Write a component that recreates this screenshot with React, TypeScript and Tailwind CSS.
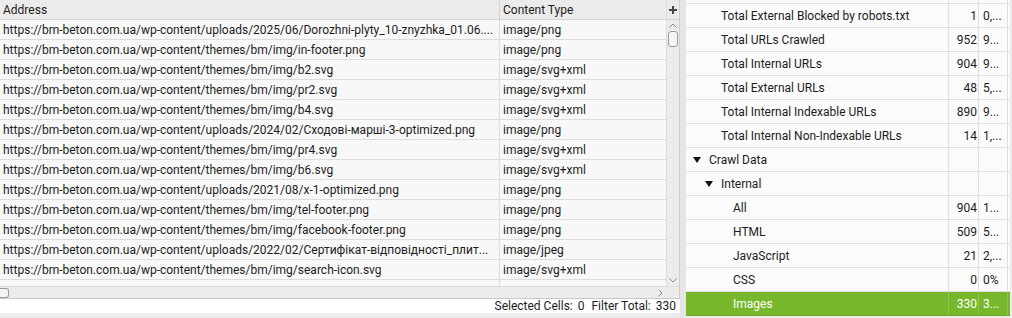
import React from "react";

const rows = [
  ["https://bm-beton.com.ua/wp-content/uploads/2025/06/Dorozhni-plyty_10-znyzhka_01.06....", "image/png"],
  ["https://bm-beton.com.ua/wp-content/themes/bm/img/in-footer.png", "image/png"],
  ["https://bm-beton.com.ua/wp-content/themes/bm/img/b2.svg", "image/svg+xml"],
  ["https://bm-beton.com.ua/wp-content/themes/bm/img/pr2.svg", "image/svg+xml"],
  ["https://bm-beton.com.ua/wp-content/themes/bm/img/b4.svg", "image/svg+xml"],
  ["https://bm-beton.com.ua/wp-content/uploads/2024/02/Сходові-марші-3-optimized.png", "image/png"],
  ["https://bm-beton.com.ua/wp-content/themes/bm/img/pr4.svg", "image/svg+xml"],
  ["https://bm-beton.com.ua/wp-content/themes/bm/img/b6.svg", "image/svg+xml"],
  ["https://bm-beton.com.ua/wp-content/uploads/2021/08/x-1-optimized.png", "image/png"],
  ["https://bm-beton.com.ua/wp-content/themes/bm/img/tel-footer.png", "image/png"],
  ["https://bm-beton.com.ua/wp-content/themes/bm/img/facebook-footer.png", "image/png"],
  ["https://bm-beton.com.ua/wp-content/uploads/2022/02/Сертифікат-відповідності_плит...", "image/jpeg"],
  ["https://bm-beton.com.ua/wp-content/themes/bm/img/search-icon.svg", "image/svg+xml"],
];

type Stat = { label: string; level: number; toggle?: boolean; n?: string; p?: string; active?: boolean };

const stats: Stat[] = [
  { label: "", level: 1 },
  { label: "Total External Blocked by robots.txt", level: 1, n: "1", p: "0,..." },
  { label: "Total URLs Crawled", level: 1, n: "952", p: "9..." },
  { label: "Total Internal URLs", level: 1, n: "904", p: "9..." },
  { label: "Total External URLs", level: 1, n: "48", p: "5,..." },
  { label: "Total Internal Indexable URLs", level: 1, n: "890", p: "9..." },
  { label: "Total Internal Non-Indexable URLs", level: 1, n: "14", p: "1,..." },
  { label: "Crawl Data", level: 0, toggle: true },
  { label: "Internal", level: 1, toggle: true },
  { label: "All", level: 2, n: "904", p: "1..." },
  { label: "HTML", level: 2, n: "509", p: "5..." },
  { label: "JavaScript", level: 2, n: "21", p: "2,..." },
  { label: "CSS", level: 2, n: "0", p: "0%" },
  { label: "Images", level: 2, n: "330", p: "3...", active: true },
];

const indent = ["pl-[23px]", "pl-[35px]", "pl-[47px]"];

function Tri() {
  return (
    <svg width="8" height="6" viewBox="0 0 8 6" className="mr-[8px] shrink-0">
      <path d="M0 0 H8 L4 6 Z" fill="#111" />
    </svg>
  );
}

export default function App() {
  return (
    <div className="w-[1012px] h-[318px] flex bg-[#ececec] overflow-hidden text-[12px] text-[#1c1c1c]" style={{ fontFamily: "Roboto, 'Liberation Sans', sans-serif" }}>
      {/* left table */}
      <div className="w-[680px] shrink-0 flex flex-col">
        <div className="flex-1 flex flex-col border-r border-[#cfcfcf] bg-[#f0f0f0]">
          <div className="flex h-[286px]">
            <div className="w-[667px] flex flex-col overflow-hidden">
              <div className="flex h-[20px] bg-[#ebebeb] border-b border-[#d4d4d4] shrink-0">
                <div className="w-[500px] px-[3px] pt-[2px] leading-[17px] border-r border-[#d4d4d4]">Address</div>
                <div className="flex-1 px-[3px] pt-[2px] leading-[17px]">Content Type</div>
              </div>
              {rows.map((r, i) => (
                <div key={i} className="flex h-[20px] bg-[#f8f8f8] border-b border-[#dcdcdc] shrink-0">
                  <div className="w-[500px] px-[3px] pt-[2px] leading-[17px] whitespace-nowrap overflow-hidden text-ellipsis border-r border-[#dcdcdc]">{r[0]}</div>
                  <div className="flex-1 px-[3px] pt-[2px] leading-[17px] whitespace-nowrap">{r[1]}</div>
                </div>
              ))}
              <div className="flex flex-1 bg-[#f8f8f8]">
                <div className="w-[500px] border-r border-[#dcdcdc]" />
              </div>
            </div>
            <div className="w-[13px] flex flex-col border-l border-[#dcdcdc] bg-[#ececec]">
              <div className="h-[20px] flex items-center justify-center bg-[#ebebeb] border-b border-[#d4d4d4]">
                <svg width="8" height="8" viewBox="0 0 8 8">
                  <path d="M3 0h2v3h3v2H5v3H3V5H0V3h3z" fill="#444" />
                </svg>
              </div>
              <div className="flex flex-col items-center flex-1 pt-[3px]">
                <svg width="8" height="5" viewBox="0 0 8 5">
                  <path d="M0.5 4.5 L4 1 L7.5 4.5" fill="none" stroke="#888" strokeWidth="1" />
                </svg>
                <div className="mt-[3px] w-[10px] h-[16px] rounded-[3px] border border-[#9a9a9a] bg-[#f4f4f4]" />
                <div className="flex-1" />
                <svg width="8" height="5" viewBox="0 0 8 5" className="mb-[3px]">
                  <path d="M0.5 0.5 L4 4 L7.5 0.5" fill="none" stroke="#888" strokeWidth="1" />
                </svg>
              </div>
            </div>
          </div>
          <div className="h-[13px] flex items-center bg-[#ececec] border-t border-[#dcdcdc] border-b border-b-[#c8c8c8]">
            <div className="w-[9px] h-[10px] rounded-r-[3px] border border-l-0 border-[#9a9a9a] bg-[#f4f4f4]" />
            <div className="flex-1" />
            <svg width="5" height="8" viewBox="0 0 5 8" className="mr-[16px]">
              <path d="M0.5 0.5 L4 4 L0.5 7.5" fill="none" stroke="#888" strokeWidth="1" />
            </svg>
          </div>
        </div>
        <div className="h-[15px] bg-white flex items-center justify-end pr-[4px] gap-[5px] leading-none">
          <span>Selected Cells:</span>
          <span className="mr-[2px]">0</span>
          <span>Filter Total:</span>
          <span>330</span>
        </div>
        <div className="h-[5px] bg-[#ececec]" />
      </div>

      <div className="w-[6px] shrink-0 bg-[#e6e6e6]" />

      {/* right summary tree */}
      <div className="flex-1 flex flex-col overflow-hidden">
        <div className="-mt-[20px] bg-[#fbfbfb]">
          {stats.map((s, i) => (
            <div
              key={i}
              className={`flex h-[24px] border-b ${s.active ? "bg-[#76b72b] text-white border-[#6aa826]" : "border-[#dedede]"}`}
            >
              <div className={`w-[262px] flex items-center pt-[1px] whitespace-nowrap ${s.toggle ? (s.level === 0 ? "pl-[7px]" : "pl-[19px]") : indent[s.level]}`}>
                {s.toggle && <Tri />}
                {s.label}
              </div>
              <div className={`w-[30px] border-l ${s.active ? "border-[#8ec456]" : "border-[#dedede]"} flex items-center justify-end pt-[1px] pr-[1px]`}>{s.n}</div>
              <div className={`w-[30px] border-l ${s.active ? "border-[#8ec456]" : "border-[#dedede]"} border-r flex items-center pt-[1px] pl-[4px] whitespace-nowrap`}>{s.p}</div>
            </div>
          ))}
        </div>
      </div>
      <div className="w-[2px] shrink-0 bg-[#ececec]" />
    </div>
  );
}
